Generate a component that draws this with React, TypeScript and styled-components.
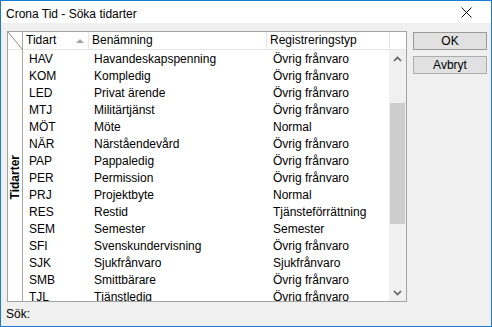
import React from 'react';
import styled, { createGlobalStyle } from 'styled-components';

const GlobalStyle = createGlobalStyle`
    html, body {
        margin: 0;
        padding: 0;
        background: #ffffff;
    }
    * {
        box-sizing: border-box;
    }
`

interface IRow {
    code: string,
    name: string,
    type: string
}

const rows: IRow[] = [
    { code: 'HAV', name: 'Havandeskapspenning', type: 'Övrig frånvaro' },
    { code: 'KOM', name: 'Kompledig', type: 'Övrig frånvaro' },
    { code: 'LED', name: 'Privat ärende', type: 'Övrig frånvaro' },
    { code: 'MTJ', name: 'Militärtjänst', type: 'Övrig frånvaro' },
    { code: 'MÖT', name: 'Möte', type: 'Normal' },
    { code: 'NÄR', name: 'Närståendevård', type: 'Övrig frånvaro' },
    { code: 'PAP', name: 'Pappaledig', type: 'Övrig frånvaro' },
    { code: 'PER', name: 'Permission', type: 'Övrig frånvaro' },
    { code: 'PRJ', name: 'Projektbyte', type: 'Normal' },
    { code: 'RES', name: 'Restid', type: 'Tjänsteförrättning' },
    { code: 'SEM', name: 'Semester', type: 'Semester' },
    { code: 'SFI', name: 'Svenskundervisning', type: 'Övrig frånvaro' },
    { code: 'SJK', name: 'Sjukfrånvaro', type: 'Sjukfrånvaro' },
    { code: 'SMB', name: 'Smittbärare', type: 'Övrig frånvaro' },
    { code: 'TJL', name: 'Tjänstledig', type: 'Övrig frånvaro' },
]

const Window = styled.div`
    width: 492px;
    height: 327px;
    border: 1px solid #1a7bd3;
    background: #f0f0f0;
    display: flex;
    flex-direction: column;
    font-family: 'Liberation Sans', Arial, sans-serif;
    font-size: 12px;
    color: #000;
    overflow: hidden;
`
const TitleBar = styled.div`
    height: 22px;
    background: #ffffff;
    display: flex;
    align-items: center;
    justify-content: space-between;
    padding: 0 19px 0 5px;
    flex-shrink: 0;
`
const Title = styled.div`
    font-size: 12px;
    padding-top: 4px;
`
const Client = styled.div`
    flex: 1;
    display: flex;
    gap: 6px;
    padding: 8px 6px 0 6px;
    min-height: 0;
`
const Grid = styled.div`
    width: 400px;
    height: 271px;
    border: 1px solid #a3a3a3;
    background: #ffffff;
    display: flex;
    flex-shrink: 0;
    overflow: hidden;
`
const Band = styled.div`
    width: 15px;
    display: flex;
    flex-direction: column;
    border-right: 1px solid #a8a8a8;
    flex-shrink: 0;
`
const Corner = styled.div`
    height: 18px;
    border-bottom: 1px solid #e5e5e5;
    flex-shrink: 0;
    svg { display: block; }
`
const BandLabel = styled.div`
    flex: 1;
    display: flex;
    align-items: center;
    justify-content: center;
    span {
        writing-mode: vertical-rl;
        transform: rotate(180deg);
        font-weight: bold;
        font-size: 12px;
        line-height: 14px;
        margin-top: 3px;
    }
`
const TableArea = styled.div`
    flex: 1;
    display: flex;
    flex-direction: column;
    min-width: 0;
`
const Header = styled.div`
    height: 18px;
    display: flex;
    border-bottom: 1px solid #e5e5e5;
    flex-shrink: 0;
`
const HeadCell = styled.div<{ w: number }>`
    width: ${props => props.w}px;
    flex-shrink: 0;
    border-right: 1px solid #e5e5e5;
    display: flex;
    align-items: center;
    justify-content: space-between;
    padding: 0 4px 0 3px;
    line-height: 17px;
`
const SortArrow = styled.span`
    width: 0;
    height: 0;
    border-left: 4px solid transparent;
    border-right: 4px solid transparent;
    border-bottom: 4px solid #a5a5a5;
    margin-right: 0px;
`
const Body = styled.div`
    flex: 1;
    display: flex;
    min-height: 0;
`
const Rows = styled.div`
    flex: 1;
    overflow: hidden;
`
const Row = styled.div`
    height: 17px;
    display: flex;
    align-items: center;
    white-space: nowrap;
`
const Cell = styled.div<{ w: number, pad: number }>`
    width: ${props => props.w}px;
    padding-left: ${props => props.pad}px;
    flex-shrink: 0;
    overflow: hidden;
`
const Scrollbar = styled.div`
    width: 17px;
    background: #f0f0f0;
    display: flex;
    flex-direction: column;
    flex-shrink: 0;
`
const ScrollArrow = styled.div`
    height: 17px;
    display: flex;
    align-items: center;
    justify-content: center;
    flex-shrink: 0;
`
const Track = styled.div`
    flex: 1;
    padding: 36px 1px 0 1px;
`
const Thumb = styled.div`
    height: 121px;
    background: #cdcdcd;
`
const Buttons = styled.div`
    display: flex;
    flex-direction: column;
    gap: 6px;
    padding-top: 1px;
`
const Button = styled.button`
    width: 74px;
    height: 18px;
    background: #e1e1e1;
    border: 1px solid ${props => props.color === 'default' ? '#9a9a9a' : '#adadad'};
    font-family: 'Liberation Sans', Arial, sans-serif;
    font-size: 12px;
    color: #000;
    padding: 0;
    line-height: 15px;
`
const Footer = styled.div`
    height: 25px;
    display: flex;
    align-items: center;
    padding-left: 5px;
    flex-shrink: 0;
`

const Chevron = ({ up }: { up: boolean }) => (
    <svg width="9" height="6" viewBox="0 0 9 6">
        <path d={up ? 'M1 5 L4.5 1.5 L8 5' : 'M1 1 L4.5 4.5 L8 1'} fill="none" stroke="#606060" strokeWidth="1.6" />
    </svg>
)

const App = () => {
    return (
        <>
            <GlobalStyle />
            <Window>
                <TitleBar>
                    <Title>Crona Tid - Söka tidarter</Title>
                    <svg width="11" height="11" viewBox="0 0 11 11">
                        <path d="M0.5 0.5 L10.5 10.5 M10.5 0.5 L0.5 10.5" stroke="#111" strokeWidth="1" />
                    </svg>
                </TitleBar>
                <Client>
                    <Grid>
                        <Band>
                            <Corner>
                                <svg width="14" height="17" viewBox="0 0 14 17">
                                    <line x1="0" y1="0" x2="14" y2="17" stroke="#8c8c8c" strokeWidth="1" />
                                </svg>
                            </Corner>
                            <BandLabel><span>Tidarter</span></BandLabel>
                        </Band>
                        <TableArea>
                            <Header>
                                <HeadCell w={66}>Tidart<SortArrow /></HeadCell>
                                <HeadCell w={178}>Benämning</HeadCell>
                                <HeadCell w={123}>Registreringstyp</HeadCell>
                            </Header>
                            <Body>
                                <Rows>
                                    {rows.map(row => (
                                        <Row key={row.code}>
                                            <Cell w={66} pad={6}>{row.code}</Cell>
                                            <Cell w={178} pad={5}>{row.name}</Cell>
                                            <Cell w={122} pad={6}>{row.type}</Cell>
                                        </Row>
                                    ))}
                                </Rows>
                                <Scrollbar>
                                    <ScrollArrow><Chevron up={true} /></ScrollArrow>
                                    <Track><Thumb /></Track>
                                    <ScrollArrow><Chevron up={false} /></ScrollArrow>
                                </Scrollbar>
                            </Body>
                        </TableArea>
                    </Grid>
                    <Buttons>
                        <Button color="default">OK</Button>
                        <Button>Avbryt</Button>
                    </Buttons>
                </Client>
                <Footer>Sök:</Footer>
            </Window>
        </>
    );
};

export default App;
